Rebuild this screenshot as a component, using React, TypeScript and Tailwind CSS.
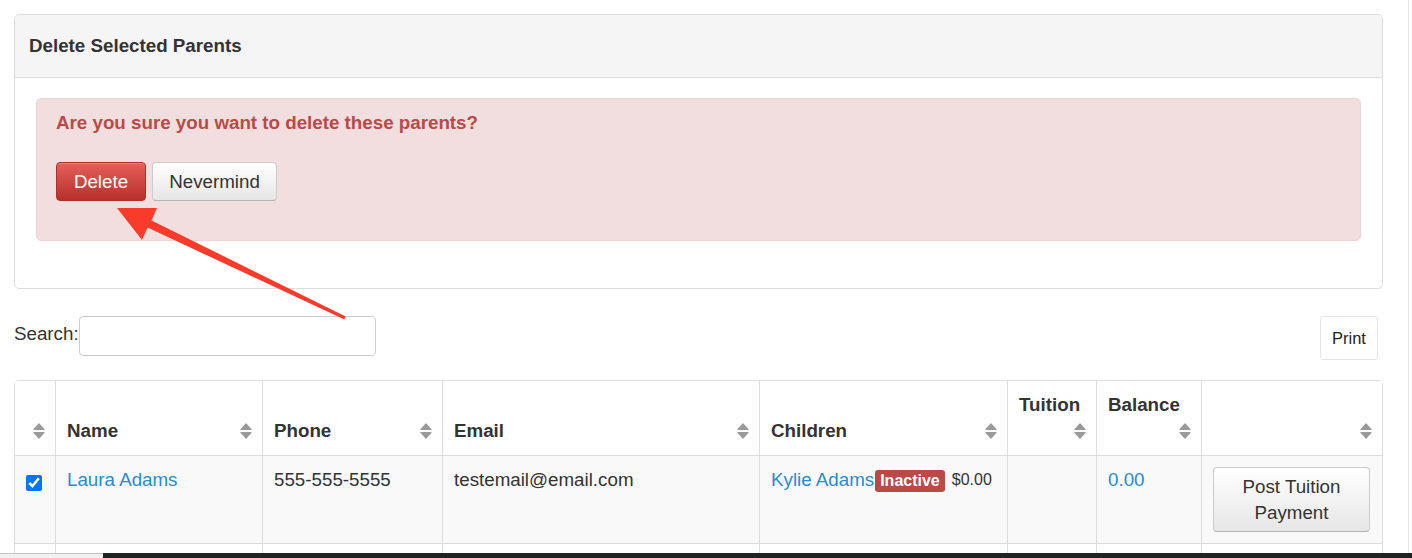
import React from "react";

const font = { fontFamily: '"Liberation Sans", Arial, sans-serif' };

function SortIcon() {
  return (
    <svg width="12" height="16" viewBox="0 0 12 16" className="shrink-0">
      <path d="M6 1 L11 6.5 H1 Z" fill="#9a9a9a" stroke="#9a9a9a" strokeWidth="1.2" strokeLinejoin="round" />
      <path d="M1 9.5 H11 L6 15 Z" fill="#9a9a9a" stroke="#9a9a9a" strokeWidth="1.2" strokeLinejoin="round" />
    </svg>
  );
}

const cols = "grid grid-cols-[40px_207px_180px_317px_248px_89px_105px_181px]";

interface Column {
  label: string;
  stacked?: boolean;
}

const columns: Column[] = [
  { label: "" },
  { label: "Name" },
  { label: "Phone" },
  { label: "Email" },
  { label: "Children" },
  { label: "Tuition", stacked: true },
  { label: "Balance", stacked: true },
  { label: "" },
];

export default function App() {
  return (
    <div style={font} className="relative h-[558px] w-[1412px] overflow-hidden bg-white text-[18.75px] leading-[26px] text-[#333]">
      <div className="flex h-[553px]">
        <div className="w-[1408px] shrink-0 overflow-hidden pt-[14px] pl-[14px]">
          <div className="w-[1369px]">
            {/* confirm panel */}
            <div className="rounded-[5px] border border-[#dddddd] bg-white">
              <div className="flex h-[63px] items-center rounded-t-[5px] border-b border-[#dddddd] bg-[#f5f5f5] px-[14px] font-bold">
                Delete Selected Parents
              </div>
              <div className="px-[21px] pt-[20px] pb-[47px]">
                <div className="rounded-[5px] border border-[#eed3d7] bg-[#f2dede] px-[19px] pt-[11px] pb-[39px]">
                  <p className="font-bold text-[#b94a48]">Are you sure you want to delete these parents?</p>
                  <div className="mt-[26px] flex gap-[6px]">
                    <button className="h-[39px] w-[90px] rounded-[4px] border border-[#a9302b] bg-gradient-to-b from-[#e6605b] to-[#b72f2a] text-white shadow-[inset_0_1px_0_rgba(255,255,255,0.2)]">
                      Delete
                    </button>
                    <button className="h-[39px] w-[125px] rounded-[4px] border border-[#cccccc] border-b-[#b3b3b3] bg-gradient-to-b from-white to-[#e6e6e6] text-[#333]">
                      Nevermind
                    </button>
                  </div>
                </div>
              </div>
            </div>

            {/* search + print */}
            <div className="mt-[27px] flex items-start justify-between">
              <div className="flex items-start">
                <label className="pt-[5px]">Search:</label>
                <input type="text" className="h-[40px] w-[297px] rounded-[4px] border border-[#cccccc] bg-white outline-none" />
              </div>
              <button className="mr-[5px] h-[44px] w-[58px] rounded-[3px] border border-[#e6e6e6] bg-white text-[16.5px] text-[#222]">
                Print
              </button>
            </div>

            {/* table */}
            <div className="mt-[20px] rounded-t-[5px] border border-b-0 border-[#dddddd]">
              <div className={`${cols} h-[75px] border-b border-[#dddddd] bg-white font-bold`}>
                {columns.map((c, i) => (
                  <div
                    key={i}
                    className={`flex pr-[10px] pb-[11px] pl-[11px] ${i > 0 ? "border-l border-[#dddddd]" : ""} ${c.stacked ? "flex-col justify-end" : "items-end justify-between"}`}
                  >
                    <span>{c.label}</span>
                    <div className={`flex h-[26px] items-center ${c.stacked ? "justify-end" : ""}`}>
                      <SortIcon />
                    </div>
                  </div>
                ))}
              </div>

              <div className={`${cols} h-[88px] border-b border-[#dddddd] bg-[#f9f9f9]`}>
                <div className="pt-[19px] pl-[11px]">
                  <input type="checkbox" defaultChecked className="block h-4 w-4" />
                </div>
                <div className="border-l border-[#dddddd] pt-[11px] pl-[11px]">
                  <a className="text-[#2a8bd2]">Laura Adams</a>
                </div>
                <div className="border-l border-[#dddddd] pt-[11px] pl-[11px]">555-555-5555</div>
                <div className="border-l border-[#dddddd] pt-[11px] pl-[11px]">testemail@email.com</div>
                <div className="flex items-start border-l border-[#dddddd] pt-[11px] pl-[11px]">
                  <a className="text-[#2a8bd2]">Kylie Adams</a>
                  <span className="mt-[3px] ml-[1px] rounded-[3px] bg-[#b94a48] px-[5px] text-[16px] leading-[22px] font-bold text-white">
                    Inactive
                  </span>
                  <span className="ml-[7px] text-[16px]">$0.00</span>
                </div>
                <div className="border-l border-[#dddddd]"></div>
                <div className="border-l border-[#dddddd] pt-[11px] pl-[11px]">
                  <a className="text-[#2a8bd2]">0.00</a>
                </div>
                <div className="border-l border-[#dddddd] pt-[11px] pl-[11px]">
                  <button className="h-[65px] w-[157px] rounded-[4px] border border-[#cccccc] border-b-[#b3b3b3] bg-gradient-to-b from-white to-[#e6e6e6] leading-[26px] text-[#333]">
                    Post Tuition
                    <br />
                    Payment
                  </button>
                </div>
              </div>

              <div className={`${cols} h-[40px] bg-white`}>
                {columns.map((_, i) => (
                  <div key={i} className={i > 0 ? "border-l border-[#dddddd]" : ""}></div>
                ))}
              </div>
            </div>
          </div>
        </div>
        <div className="flex-1 border-l border-[#e6e6e6] bg-white"></div>
      </div>

      {/* bottom strip */}
      <div className="flex h-[5px]">
        <div className="w-[103px] border-t border-[#c4c4c4] bg-[#f0f0f0]"></div>
        <div className="flex-1 bg-[#1f2422]"></div>
      </div>

      {/* annotation arrow */}
      <svg className="pointer-events-none absolute inset-0" width="1412" height="558">
        <polygon
          points="117,208 157,208 151.5,220.4 345.6,316.6 344.4,319.4 147.5,227.6 142,240"
          fill="#f83b2b"
        />
      </svg>
    </div>
  );
}
